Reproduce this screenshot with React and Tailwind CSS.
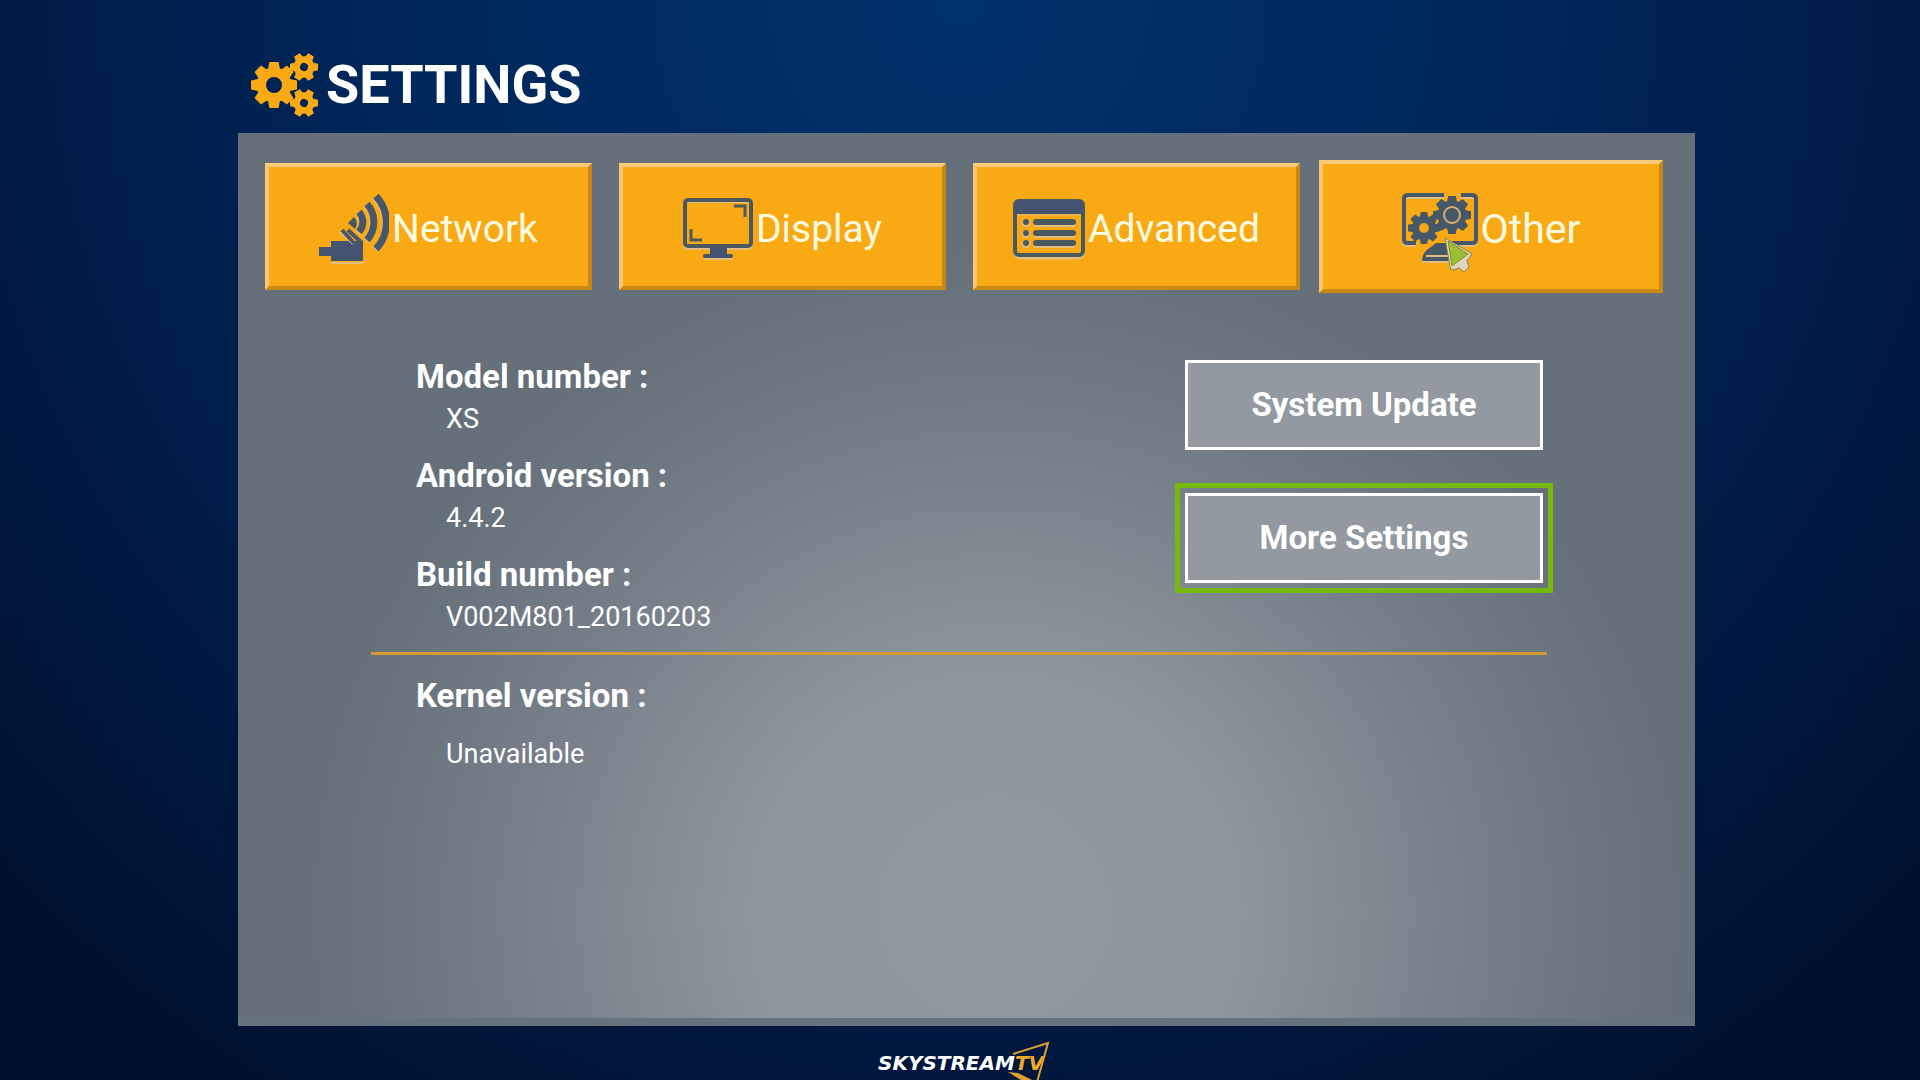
import clsx from "clsx";

// ring with tapered teeth around it
function Gear({ cx, cy, r, teeth, tooth, hole, turn = 0 }) {
  const w = r * tooth;
  return (
    <g transform={`translate(${cx} ${cy}) rotate(${turn})`}>
      <circle r={(r * 0.76 + hole) / 2} fill="none" stroke="currentColor" strokeWidth={r * 0.76 - hole} />
      {Array.from({ length: teeth }, (_, i) => (
        <path
          key={i}
          transform={`rotate(${(360 / teeth) * i})`}
          d={`M${-w * 0.65} ${-r * 0.68} L${-w * 0.5} ${-r} H${w * 0.5} L${w * 0.65} ${-r * 0.68} Z`}
          fill="currentColor"
        />
      ))}
    </g>
  );
}

function SettingsIcon() {
  return (
    <svg viewBox="0 0 68 64" className="h-16 w-[68px] text-[#f9a913]" aria-hidden="true">
      <Gear cx={24} cy={32} r={23} teeth={8} tooth={0.4} hole={8} />
      <Gear cx={54} cy={14} r={14} teeth={6} tooth={0.46} hole={4} turn={30} />
      <Gear cx={54} cy={50} r={14} teeth={6} tooth={0.46} hole={4} turn={30} />
    </svg>
  );
}

function NetworkIcon() {
  return (
    <svg viewBox="0 0 70 70" className="h-[70px] w-[70px]" fill="none" aria-hidden="true">
      <path d="M12 69h32" stroke="#e0bd80" strokeWidth="2" />
      <path d="M0 53h12v-6h32v20H12v-5H0z" fill="#435370" />
      <path d="M21 38 34 50" stroke="#e0bd80" strokeWidth="2" />
      <path d="M23 36 35 49M29 36l14 13" stroke="#485768" strokeWidth="4" />
      <path d="M29 29l6-6a9 9 0 0 1 1 12z" fill="#485768" />
      <path
        d="M40 18a15 15 0 0 1 0 20M48 10a27 27 0 0 1 0 36M57 2a39 39 0 0 1 0 53"
        stroke="#e0bd80"
        strokeWidth="7"
        transform="translate(-1 1)"
      />
      <path d="M40 18a15 15 0 0 1 0 20M48 10a27 27 0 0 1 0 36M57 2a39 39 0 0 1 0 53" stroke="#485768" strokeWidth="7" />
    </svg>
  );
}

function DisplayIcon() {
  return (
    <svg viewBox="0 0 70 62" className="h-[62px] w-[70px]" fill="none" aria-hidden="true">
      <path d="M22 61h27" stroke="#e0bd80" strokeWidth="2" />
      <rect x="2" y="3" width="66" height="47" rx="3" stroke="#e0bd80" strokeWidth="4" />
      <rect x="2" y="2" width="66" height="46" rx="3" stroke="#4a5960" strokeWidth="4" />
      <path d="M27 49h17v8H27z" fill="#435370" />
      <path d="M22 58h26" stroke="#435370" strokeWidth="4" strokeLinecap="round" />
      <path d="M51 8h11v11M8 31v11h11" stroke="#4a5960" strokeWidth="3" />
    </svg>
  );
}

function AdvancedIcon() {
  return (
    <svg viewBox="0 0 72 62" className="h-[62px] w-[72px]" fill="none" aria-hidden="true">
      <rect x="2" y="4" width="68" height="56" rx="5" stroke="#e0bd80" strokeWidth="3" />
      <rect x="2" y="3" width="68" height="54" rx="4" stroke="#4a5960" strokeWidth="4" />
      <path d="M2 16V5q0-3 3-3h62q3 0 3 3v11z" fill="#435370" />
      <path d="M4 17h64" stroke="#e0bd80" strokeWidth="1" />
      {[24, 35, 45].map((y) => (
        <g key={y}>
          <path d={`M21 ${y + 2}h41`} stroke="#e0bd80" strokeWidth="6" />
          <path d={`M23 ${y}h37`} stroke="#4a5960" strokeWidth="6" strokeLinecap="round" />
          <circle cx="13" cy={y + 1} r="4" fill="#e0bd80" />
          <circle cx="13" cy={y} r="3" fill="#4a5960" />
        </g>
      ))}
    </svg>
  );
}

function OtherIcon() {
  return (
    <svg viewBox="0 0 76 72" className="h-[72px] w-[76px] text-[#465767]" fill="none" aria-hidden="true">
      <path
        d="M42 2H6Q2 2 2 6v41q0 3 4 3h8M59 2h11q4 0 4 4v41q0 3-4 3H45"
        stroke="#e0bd80"
        strokeWidth="4"
        transform="translate(0 2)"
      />
      <path d="M42 2H6Q2 2 2 6v41q0 3 4 3h8M59 2h11q4 0 4 4v41q0 3-4 3H45" stroke="currentColor" strokeWidth="4" />
      <path d="M34 50h14v18H20q0-9 9-14z" fill="currentColor" />
      <path d="M24 63h22M20 69h28" stroke="#e0bd80" strokeWidth="2" />
      <Gear cx={22} cy={35} r={16} teeth={8} tooth={0.4} hole={5} />
      <circle cx="50" cy="22" r="17" fill="#f9a913" />
      <Gear cx={50} cy={22} r={19} teeth={8} tooth={0.4} hole={7} />
      <circle cx="50" cy="22" r="8" fill="#465767" stroke="#d8ae72" strokeWidth="2" />
    </svg>
  );
}

function Pointer() {
  return (
    <svg viewBox="0 0 28 36" className="absolute top-[73px] left-[121px] h-9 w-7" aria-hidden="true">
      <path d="M1 1 27 16q1 2-1 4l-3 3 2 7-5 5-5-4-6 2q-3 0-3-3z" fill="#ddd6bc" stroke="#8d8144" strokeWidth="1" />
      <path d="M4 4 24 17 8 29z" fill="#9dbd32" stroke="#768f25" strokeWidth="1" />
    </svg>
  );
}

const tabs = [
  { name: "Network", Icon: NetworkIcon },
  { name: "Display", Icon: DisplayIcon },
  { name: "Advanced", Icon: AdvancedIcon },
  { name: "Other", Icon: OtherIcon, selected: true },
];

function Tab({ name, Icon, selected }) {
  return (
    <button
      type="button"
      className={clsx(
        "relative flex items-center justify-center gap-[3px] border-4 border-t-[#fbcb7c] border-r-[#c58717] border-b-[#c98a16] border-l-[#fbc671] bg-[#f9a913] pt-1 text-[#fffbe0]",
        selected ? "-my-[3px] -mr-[9px] -ml-2 text-[41px]" : "text-[39px]"
      )}
    >
      <Icon />
      <span className="pt-0.5">{name}</span>
      {selected && <Pointer />}
    </button>
  );
}

function Info({ label, value }) {
  return (
    <div>
      <dt className="text-[33px] leading-[46px] font-bold">{label} :</dt>
      <dd className="ml-[30px] text-[27px] leading-[38px]">{value}</dd>
    </div>
  );
}

function ActionButton({ children }) {
  return (
    <button type="button" className="h-[90px] w-[358px] border-[3px] border-white bg-[#9299a1] text-[33px] font-bold">
      {children}
    </button>
  );
}

function Logo() {
  return (
    <div className="relative flex pr-1.5 font-['DejaVu_Sans',sans-serif] text-[20px] leading-none font-bold italic">
      <svg viewBox="0 0 44 39" className="absolute right-0 -bottom-[7px] h-[39px] w-11" fill="none" aria-hidden="true">
        <path d="M7 13 42 2 31 41" stroke="#e0a02f" strokeWidth="2" />
        <path d="M2 31l10 1 18 9H18z" fill="#e0a02f" />
      </svg>
      <span>SKYSTREAM</span>
      <span className="text-[#f0a92c]">TV</span>
    </div>
  );
}

export default function App() {
  return (
    <div className="flex min-h-screen flex-col bg-[#00122f] bg-[radial-gradient(ellipse_68%_120%_at_50%_0%,#01326c_0%,#00265a_45%,#001a43_75%,#00112f_100%)] font-['Roboto',sans-serif] text-white">
      <header className="flex h-[133px] items-center gap-2 pt-9 pl-[250px]">
        <SettingsIcon />
        <h1 className="text-[54px] font-bold">SETTINGS</h1>
      </header>

      <main className="mr-[225px] ml-[238px] flex-1 border-b-8 border-[#66727d] bg-[#65707b] bg-[radial-gradient(ellipse_47%_75%_at_52%_88%,#929aa1_0%,#8e969e_35%,#737c87_75%,#65707b_100%)]">
        <nav className="grid h-[157px] grid-cols-4 gap-[27px] pt-[30px] pr-[41px] pl-[27px]">
          {tabs.map((tab) => (
            <Tab key={tab.name} {...tab} />
          ))}
        </nav>

        <div className="mr-[148px] ml-[133px] flex justify-between border-b-[3px] border-[#d69a33] pt-16 pr-1 pb-4 pl-[45px]">
          <dl className="flex flex-col gap-[15px]">
            <Info label="Model number" value="XS" />
            <Info label="Android version" value="4.4.2" />
            <Info label="Build number" value="V002M801_20160203" />
          </dl>
          <div className="flex flex-col gap-[43px] pt-1.5">
            <ActionButton>System Update</ActionButton>
            <div className="-m-[10px] border-[5px] border-[#76b90b] p-[5px]">
              <ActionButton>More Settings</ActionButton>
            </div>
          </div>
        </div>

        <dl className="pt-[18px] pl-[178px]">
          <dt className="text-[33px] leading-[46px] font-bold">Kernel version :</dt>
          <dd className="mt-4 ml-[30px] text-[27px] leading-[38px]">Unavailable</dd>
        </dl>
      </main>

      <footer className="flex h-[54px] items-end justify-center overflow-hidden pb-[7px] pl-2">
        <Logo />
      </footer>
    </div>
  );
}
